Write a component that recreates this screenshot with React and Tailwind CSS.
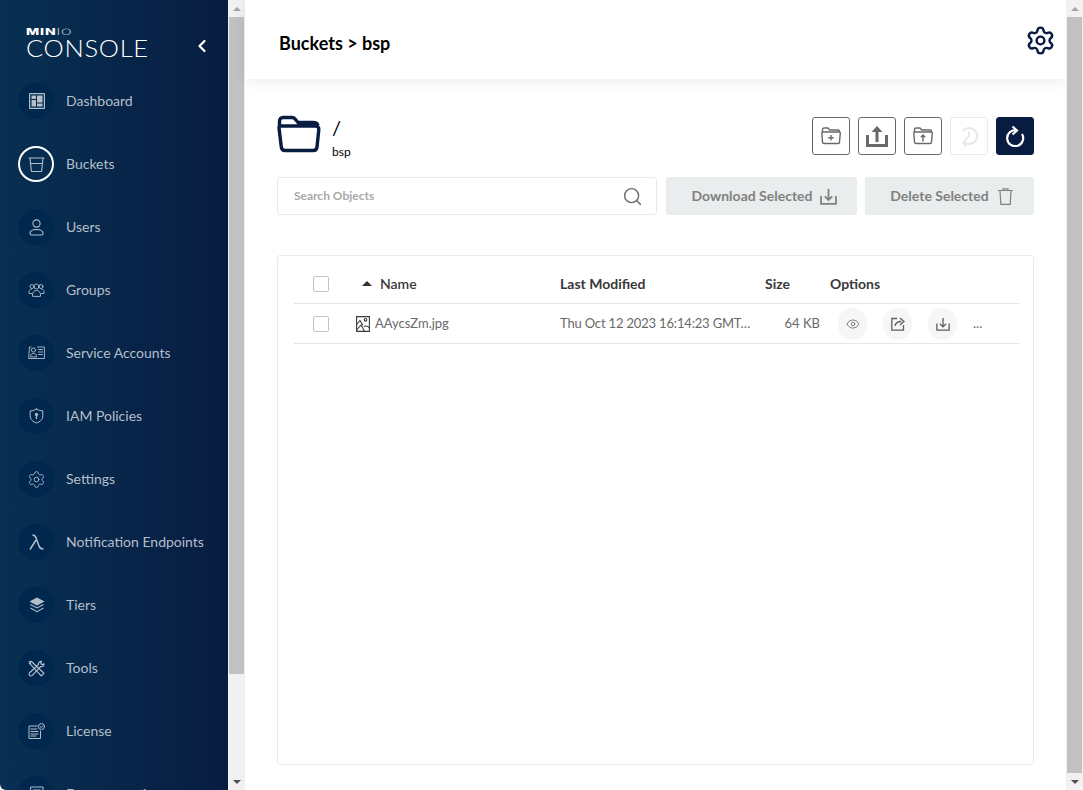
import React from 'react'
import { Search, Settings, Eye } from 'lucide-react'

const stroke = { fill: 'none', stroke: 'currentColor', strokeLinecap: 'round', strokeLinejoin: 'round' }

function DashboardIcon() {
  return (
    <svg width="16" height="16" viewBox="0 0 16 16">
      <path fillRule="evenodd" fill="currentColor" d="M1 0h14a1 1 0 0 1 1 1v14a1 1 0 0 1-1 1H1a1 1 0 0 1-1-1V1a1 1 0 0 1 1-1zm.2 1.200v13.600h13.600V1.200zM2.500 2.500h4.500v3.500H2.500zM2.500 7h4.500v6.500H2.500zM8 2.500h5.500v7H8zM8 10.500h5.500v3H8z" />
    </svg>
  )
}
function BucketIcon() {
  return (
    <svg width="17" height="17" viewBox="0 0 17 17" {...stroke} strokeWidth="1.100">
      <path d="M1 2h15M2 2l1.400 13.500h10.200L15 2M2.600 7.500h11.800" />
    </svg>
  )
}
function UserIcon() {
  return (
    <svg width="15" height="17" viewBox="0 0 15 17" {...stroke} strokeWidth="1.100">
      <circle cx="7.500" cy="4.500" r="3.600" />
      <path d="M1 14.500c0-3 2.500-4 6.500-4s6.500 1 6.500 4c0 1-.5 1.500-1.500 1.500h-10c-1 0-1.500-.5-1.500-1.500z" />
    </svg>
  )
}
function GroupIcon() {
  return (
    <svg width="17" height="14" viewBox="0 0 17 14" {...stroke} strokeWidth="0.900">
      <circle cx="8.500" cy="3.500" r="2.500" />
      <circle cx="4" cy="3.500" r="2" />
      <circle cx="13" cy="3.500" r="2" />
      <path d="M4.500 13c-.5-3 1-5.500 4-5.500s4.500 2.500 4 5.500zM3.500 10.500H1c-.5-2 .5-4.500 2.500-4.500M13.500 10.500H16c.5-2-.5-4.500-2.500-4.500" />
    </svg>
  )
}
function AccountsIcon() {
  return (
    <svg width="17" height="14" viewBox="0 0 17 14" {...stroke} strokeWidth="0.900">
      <path d="M3 1H1.500L.6 12.500h15.800V1H9.500" />
      <circle cx="5.500" cy="4" r="2.100" />
      <path d="M2.500 10.500c0-2 1-3 3-3s3 1 3 3zM10.500 3.500h4M10.500 6h4M10.500 8.500h4" />
    </svg>
  )
}
function ShieldIcon() {
  return (
    <svg width="15" height="16" viewBox="0 0 15 16" {...stroke} strokeWidth="1">
      <path d="M7.500 1c2 1.300 4 1.800 6.300 1.800v5c0 3.500-2.500 6-6.300 7.200-3.800-1.200-6.300-3.700-6.300-7.200v-5C3.500 2.800 5.500 2.300 7.500 1z" />
      <circle cx="7.500" cy="6.500" r="1.200" fill="currentColor" />
      <path d="M7.500 7v3.500" strokeWidth="1.300" />
    </svg>
  )
}
function GearIcon() {
  return <Settings size={19} strokeWidth={1.100} />
}
function LambdaIcon() {
  return (
    <svg width="16" height="16" viewBox="0 0 16 16" {...stroke} strokeWidth="1.500" strokeLinecap="butt">
      <path d="M1 15.500 7 6M3.500 1c2.200 0 3 1 3.800 3.500L10 12c.6 2 1.500 3 4.500 3" />
    </svg>
  )
}
function TiersIcon() {
  return (
    <svg width="16" height="16" viewBox="0 0 16 16">
      <path fill="currentColor" d="M8 .5 15.500 4.500 8 8.500.5 4.500z" />
      <path fill="none" stroke="currentColor" strokeWidth="1.100" d="M1.500 7.500 8 11l6.500-3.500M1.500 11 8 14.700l6.500-3.700" />
    </svg>
  )
}
function ToolsIcon() {
  return (
    <svg width="17" height="17" viewBox="0 0 16 16" {...stroke} strokeWidth="1.100">
      <path d="M3 1.200 1.200 3 12.500 15l2.500-2.500zM1 1.500l1.500 1.500" />
      <path d="M15 3.500c-1 .8-2 .8-2.500.3s-.5-1.500.3-2.500c-1.800-.3-3.300 1-3 3L1.500 12c-.8 1-.6 1.800 0 2.500s1.700.8 2.500 0l7.800-8.300c2 .3 3.500-1 3.200-2.700z" />
    </svg>
  )
}
function LicenseIcon() {
  return (
    <svg width="17" height="16" viewBox="0 0 17 16" {...stroke} strokeWidth="1">
      <path d="M9.500 3H1v12.500h11.500V8" />
      <path d="M3 6h6M3 8.500h7M3 11h7M3 13h5" />
      <circle cx="13.500" cy="3.500" r="3" />
      <path d="m12.200 3.700 1 .9 1.500-1.800" />
    </svg>
  )
}
function DocIcon() {
  return (
    <svg width="14" height="16" viewBox="0 0 14 16" {...stroke} strokeWidth="1">
      <path d="M1 1h12v14H1zM3.500 4h7v3h-7z" />
    </svg>
  )
}

const menu = [
  ['Dashboard', DashboardIcon],
  ['Buckets', BucketIcon],
  ['Users', UserIcon],
  ['Groups', GroupIcon],
  ['Service Accounts', AccountsIcon],
  ['IAM Policies', ShieldIcon],
  ['Settings', GearIcon],
  ['Notification Endpoints', LambdaIcon],
  ['Tiers', TiersIcon],
  ['Tools', ToolsIcon],
  ['License', LicenseIcon],
  ['Documentation', DocIcon],
]

function ScrollBar({ thumbHeight, round }) {
  return (
    <div className={`w-[17px] h-full shrink-0 bg-[#f1f1f1] flex flex-col ${round ? 'rounded-br-[6px]' : ''}`}>
      <div className="h-[17px] flex items-center justify-center shrink-0">
        <div className="w-0 h-0 border-x-[4px] border-x-transparent border-b-[4px] border-b-[#a3a3a3]" />
      </div>
      <div className="flex-1">
        <div className="w-[15px] mx-auto bg-[#c1c1c1]" style={{ height: thumbHeight }} />
      </div>
      <div className="h-[17px] flex items-center justify-center shrink-0">
        <div className="w-0 h-0 border-x-[4px] border-x-transparent border-t-[4px] border-t-[#505050]" />
      </div>
    </div>
  )
}

function Sidebar() {
  return (
    <div className="w-[228px] h-full shrink-0 overflow-hidden bg-[linear-gradient(90deg,#073052_0%,#081c42_100%)] rounded-bl-[6px]">
      <div className="h-[68px] pl-[26px] pr-[20px] pt-[27px] flex justify-between">
        <div className="text-white leading-none">
          <div className="text-[8.500px] h-[11px] leading-[10px] tracking-[0.5px] origin-left scale-x-[1.65] whitespace-nowrap font-['Inter',sans-serif]">
            <span className="font-extrabold">MIN</span><span className="font-extralight">IO</span>
          </div>
          <div className="text-[23px] leading-[20px] font-light tracking-[0.6px] origin-left scale-x-[1.11] whitespace-nowrap">CONSOLE</div>
        </div>
        <svg width="10" height="14" viewBox="0 0 10 14" className="mt-[12px] mr-[1px] text-white" {...stroke} strokeWidth="2.200">
          <path d="M7.500 2 2.500 7l5 5" />
        </svg>
      </div>
      <div className="flex flex-col gap-[27px] pl-[18px] pt-[15px]">
        {menu.map(([label, Icon]) => (
          <div key={label} className="flex items-center h-[36px] text-[#b4bfca]">
            <div className={`w-[36px] h-[36px] pl-[1px] rounded-full shrink-0 flex items-center justify-center ${label === 'Buckets' ? 'border-2 border-white' : 'bg-[#00274d]'}`}>
              <Icon />
            </div>
            <span className="ml-[12px] text-[14px] leading-[17px] mt-[-2px] whitespace-nowrap">{label}</span>
          </div>
        ))}
      </div>
    </div>
  )
}

function ToolButton({ children, cls }) {
  return (
    <div className={`w-[38px] h-[38px] rounded-[3px] flex items-center justify-center border ${cls}`}>
      {children}
    </div>
  )
}

function ActionCircle({ children }) {
  return (
    <div className="w-[29px] h-[32px] rounded-full bg-[#f6f6f6] flex items-center justify-center text-[#5f5f5f]">
      {children}
    </div>
  )
}

function DownloadGlyph({ size = 16, width = 1.500 }) {
  return (
    <svg width={size} height={size} viewBox="0 0 16 16" fill="none" stroke="currentColor" strokeWidth={width}>
      <path d="M1 7.500V15h14V7.500M8 1v10M4.500 7.800 8 11.300l3.500-3.500" />
    </svg>
  )
}

function Checkbox() {
  return <div className="w-[16px] h-[16px] border border-[#c4c4c4] rounded-[2px] bg-white" />
}

export default function App() {
  return (
    <div className="w-[1083px] h-[790px] flex overflow-hidden bg-white font-['Lato',sans-serif]">
      <Sidebar />
      <ScrollBar thumbHeight={657} />

      <div className="flex-1 min-w-0 h-full flex flex-col">
        <div className="h-[79px] shrink-0 pl-[34px] pr-[10px] flex items-center justify-between shadow-[0_3px_12px_rgba(0,0,0,0.07)]">
          <span className="text-[18px] font-bold text-black mt-[8px]">Buckets &gt; bsp</span>
          <Settings size={31} strokeWidth={1.900} className="text-[#081c42] mt-[1px]" />
        </div>

        <div className="pl-[32px] pr-[32px] pt-[38px]">
          <div className="flex justify-between h-[46px]">
            <div className="flex">
              <svg width="44" height="38" viewBox="0 0 44 38" className="text-[#081c42] mt-[-2px]" fill="none" stroke="currentColor" strokeWidth="3.400">
                <path d="M2.500 10V6c0-2 1.500-3.500 3.500-3.500h9c1.500 0 2.500.7 3.300 1.700L21 7.500h15c3 0 4.500 1 5 3M2.500 11h36c2 0 3.500 1.500 3.300 3.500L40 32c-.2 2-1.700 3.500-3.700 3.500H8c-2 0-3.500-1.500-3.700-3.500L2 13c0-1 0-2 .5-2z" strokeLinejoin="round" />
              </svg>
              <div className="ml-[11px]">
                <div className="text-[20px] leading-[20px] h-[22px] text-black">/</div>
                <div className="text-[12px] leading-[14px] mt-[6px] text-black">bsp</div>
              </div>
            </div>
            <div className="flex gap-[8px]">
              <ToolButton cls="border-[#696969] text-[#696969]">
                <svg width="20" height="18" viewBox="0 0 20 18" fill="none" stroke="currentColor" strokeWidth="1.400" strokeLinejoin="round">
                  <path d="M1.500 5V2.500c0-.8.5-1.500 1.500-1.500h4l1.700 2H17c1 0 1.500.5 1.500 1.500M1 5h17.500c.5 0 .8.5.8 1L18.500 15c0 1-.5 1.500-1.500 1.500H3c-1 0-1.500-.5-1.500-1.500L.8 6c0-.5 0-1 .2-1zM10 8v5.500M7.300 10.800h5.400" />
                </svg>
              </ToolButton>
              <ToolButton cls="border-[#696969] text-[#696969]">
                <svg width="22" height="21" viewBox="0 0 22 21" fill="currentColor">
                  <path d="M11 0l5.500 6h-4v10h-3V6h-4zM0 9h3v9h16V9h3v12H0z" />
                </svg>
              </ToolButton>
              <ToolButton cls="border-[#696969] text-[#696969]">
                <svg width="20" height="18" viewBox="0 0 20 18" fill="none" stroke="currentColor" strokeWidth="1.400" strokeLinejoin="round">
                  <path d="M1.500 5V2.500c0-.8.5-1.500 1.500-1.500h4l1.700 2H17c1 0 1.500.5 1.500 1.500M1 5h17.500c.5 0 .8.5.8 1L18.500 15c0 1-.5 1.500-1.500 1.500H3c-1 0-1.500-.5-1.500-1.500L.8 6c0-.5 0-1 .2-1zM10 8v6.500M7.800 10.200 10 8l2.200 2.200" />
                </svg>
              </ToolButton>
              <ToolButton cls="border-[#eaeaea] text-[#e8e8e8]">
                <svg width="22" height="24" viewBox="0 0 22 24" fill="none" stroke="currentColor" strokeWidth="2.200">
                  <path d="M5 6.700A8 8 0 1 1 6.500 18.600" />
                  <path d="M8.500 15.500 5 19l3.500 3M11 7.500v5l-3.500 2" strokeWidth="1.800" />
                </svg>
              </ToolButton>
              <ToolButton cls="bg-[#081c42] border-[#081c42] text-white">
                <svg width="20" height="22" viewBox="0 0 20 22" fill="none" stroke="currentColor" strokeWidth="2.200">
                  <path d="M11 5.200A8 8 0 1 0 17 9" />
                  <path d="M7.500 1.500 12 5.500 7.500 9.500" />
                </svg>
              </ToolButton>
            </div>
          </div>

          <div className="flex gap-[9px] mt-[14px] h-[38px]">
            <div className="w-[380px] border border-[#eaeaea] rounded-[3px] pl-[16px] pr-[13px] flex items-center justify-between">
              <span className="text-[12px] text-[#a8a8a8] font-bold">Search Objects</span>
              <Search size={21} strokeWidth={1.700} className="text-[#6f6f6f]" />
            </div>
            <div className="w-[191px] pl-[5px] rounded-[3px] bg-[#e9edee] text-[#818181] flex items-center justify-center gap-[7px] text-[14px] font-bold">
              <span className="mt-[-2px]">Download Selected</span>
              <DownloadGlyph size={17} width={1.700} />
            </div>
            <div className="w-[169px] pl-[4px] ml-[-1px] rounded-[3px] bg-[#e9edee] text-[#818181] flex items-center justify-center gap-[9px] text-[14px] font-bold">
              <span className="mt-[-2px]">Delete Selected</span>
              <svg width="15" height="17" viewBox="0 0 15 17" fill="none" stroke="currentColor" strokeWidth="1.200">
                <path d="M0 2.500h15M5 2.500V.8h5v1.700M2 2.500l.8 13.900h9.400L13 2.500" />
              </svg>
            </div>
          </div>

          <div className="mt-[40px] h-[510px] border border-[#eaeaea] rounded-[3px] pl-[16px] pr-[14px] text-[13px]">
            <div className="h-[48px] pt-[8px] border-b border-[#e6e6e6] flex items-center font-bold text-[14px] text-[#393939]">
              <div className="w-[68px] pl-[19px]"><Checkbox /></div>
              <div className="w-[198px] flex items-center">
                <div className="w-0 h-0 border-x-[5px] border-x-transparent border-b-[5px] border-b-[#333] mr-[8px]" />
                <span className="font-semibold">Name</span>
              </div>
              <div className="w-[205px]">Last Modified</div>
              <div className="w-[65px]">Size</div>
              <div>Options</div>
            </div>
            <div className="h-[40px] border-b border-[#e6e6e6] flex items-center text-[#696969]">
              <div className="w-[62px] pl-[19px]"><Checkbox /></div>
              <div className="w-[204px] flex items-center">
                <svg width="14" height="16" viewBox="0 0 14 16" fill="none" stroke="#393939" strokeWidth="1.100" className="mr-[5px]">
                  <path d="M.6.6h12.800v14.800H.6z" />
                  <circle cx="9.500" cy="3.800" r="1.300" />
                  <path d="M.6 8.500 4 4.500c1.500 2.500 2 3.500 3 4.500M.6 14l4.500-5 3.500 6.400M8 11c1-1.500 3.500-1.500 5.400 1" />
                </svg>
                <span>AAycsZm.jpg</span>
              </div>
              <div className="w-[195px] whitespace-nowrap tracking-[-0.17px]">Thu Oct 12 2023 16:14:23 GMT…</div>
              <div className="w-[65px] text-right">64 KB</div>
              <div className="flex items-center ml-[18px] gap-[16px]">
                <ActionCircle><Eye size={14} strokeWidth={1.300} /></ActionCircle>
                <ActionCircle>
                  <svg width="14" height="14" viewBox="0 0 14 14" fill="none" stroke="currentColor" strokeWidth="1.300">
                    <path d="M6 1.500H.8v11.700h11.700V8M4 9c.5-3 3-4.500 6.500-4.500M9 1l4 3.500-4 3.500" />
                  </svg>
                </ActionCircle>
                <ActionCircle><DownloadGlyph size={14} width={1.500} /></ActionCircle>
                <span>...</span>
              </div>
            </div>
          </div>
        </div>
      </div>

      <ScrollBar thumbHeight={756} round />
    </div>
  )
}
